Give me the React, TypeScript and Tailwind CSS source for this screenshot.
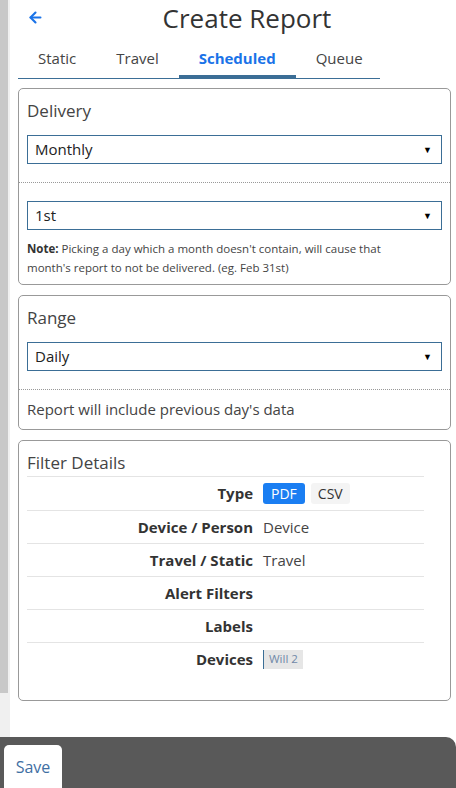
import { ArrowLeft } from "lucide-react"

const font = { fontFamily: '"Open Sans", "Noto Sans", sans-serif' }

function Select({ value }: { value: string }) {
    return (
        <div className="flex items-center justify-between h-[29px] border border-[#3b6e96] pl-[7px] pr-[9px] text-[15px] text-[#222]">
            <span>{value}</span>
            <span className="text-[9px] text-black">▼</span>
        </div>
    )
}

function Row({ label, children, tall }: { label: string, children?: any, tall?: boolean }) {
    return (
        <div className={`flex ${tall ? 'h-[34px]' : 'h-[33px]'} items-center border-t border-[#e4e4e4]`}>
            <div className="w-[226px] text-right font-bold text-[15px] text-[#333]">{label}</div>
            <div className="ml-[10px] flex items-center gap-[6px] text-[15px] text-[#444]">{children}</div>
        </div>
    )
}

export default function App() {
    return (
        <div style={font} className="w-[456px] h-[788px] flex flex-col bg-white overflow-hidden">
            <div className="flex flex-row h-[737px]">
                <div className="w-[10px] h-full bg-[#f0f0f0]">
                    <div className="w-[8px] h-[693px] bg-[#c8c8c8]"></div>
                </div>
                <div className="flex-1 flex flex-col">
                    {/* header */}
                    <div className="flex flex-row items-center h-[38px] pb-[3px]">
                        <ArrowLeft className="ml-[17px] w-[17px] h-[17px] text-[#1a73e8]" strokeWidth={3} />
                        <h1 className="flex-1 text-center pr-[6px] text-[26px] font-medium text-[#333] leading-[30px]">Create Report</h1>
                    </div>
                    {/* tabs */}
                    <div className="flex flex-row ml-[8px] w-[362px] h-[41px] border-b border-[#3b6e96] text-[15px] text-[#444]">
                        <div className="px-[20px] flex items-center">Static</div>
                        <div className="px-[20px] flex items-center">Travel</div>
                        <div className="px-[20px] flex items-center font-bold text-[#1a73e8] border-b-[3px] border-[#3b6e96] pt-[3px]">Scheduled</div>
                        <div className="px-[20px] flex items-center">Queue</div>
                    </div>

                    <div className="flex flex-col gap-[10px] ml-[8px] mr-[5px] mt-[9px]">
                        {/* delivery */}
                        <div className="border border-[#999] rounded-[5px]">
                            <div className="px-[8px] pt-[9px] pb-[18px] border-b border-dotted border-[#999]">
                                <div className="text-[17px] leading-[26px] text-[#444] mb-[11px]">Delivery</div>
                                <Select value="Monthly" />
                            </div>
                            <div className="px-[8px] pt-[18px] pb-[7px]">
                                <Select value="1st" />
                                <p className="mt-[9px] max-w-[380px] text-[11.5px] leading-[19px] text-[#444]">
                                    <b className="text-[#333]">Note:</b> Picking a day which a month doesn't contain, will cause that month's report to not be delivered. (eg. Feb 31st)
                                </p>
                            </div>
                        </div>

                        {/* range */}
                        <div className="border border-[#999] rounded-[5px]">
                            <div className="px-[8px] pt-[9px] pb-[18px] border-b border-dotted border-[#999]">
                                <div className="text-[17px] leading-[26px] text-[#444] mb-[11px]">Range</div>
                                <Select value="Daily" />
                            </div>
                            <div className="px-[8px] pt-[8px] pb-[9px] text-[15px] leading-[22px] text-[#444]">
                                Report will include previous day's data
                            </div>
                        </div>

                        {/* filter details */}
                        <div className="border border-[#999] rounded-[5px] h-[261px] pl-[8px] pr-[26px] pt-[9px]">
                            <div className="text-[17px] leading-[26px] text-[#444]">Filter Details</div>
                            <Row label="Type" tall>
                                <span className="h-[21px] px-[8px] flex items-center rounded-[3px] bg-[#1a7ef2] text-white text-[14px]">PDF</span>
                                <span className="h-[21px] px-[7px] flex items-center rounded-[3px] bg-[#f4f4f4] text-[#333] text-[14px]">CSV</span>
                            </Row>
                            <Row label="Device / Person">Device</Row>
                            <Row label="Travel / Static">Travel</Row>
                            <Row label="Alert Filters" />
                            <Row label="Labels" />
                            <Row label="Devices">
                                <span className="h-[19px] px-[5px] flex items-center bg-[#e6e6e6] border-l border-[#3b6e96] text-[11.5px] text-[#7088a8]">Will 2</span>
                            </Row>
                        </div>
                    </div>
                </div>
            </div>
            {/* footer */}
            <div className="h-[51px] bg-[#595959] rounded-tr-[10px] pl-[4px] pt-[8px]">
                <button className="w-[58px] h-[50px] bg-white rounded-[5px] text-[16px] text-[#3f6fa3] pb-[6px]">Save</button>
            </div>
        </div>
    )
}
